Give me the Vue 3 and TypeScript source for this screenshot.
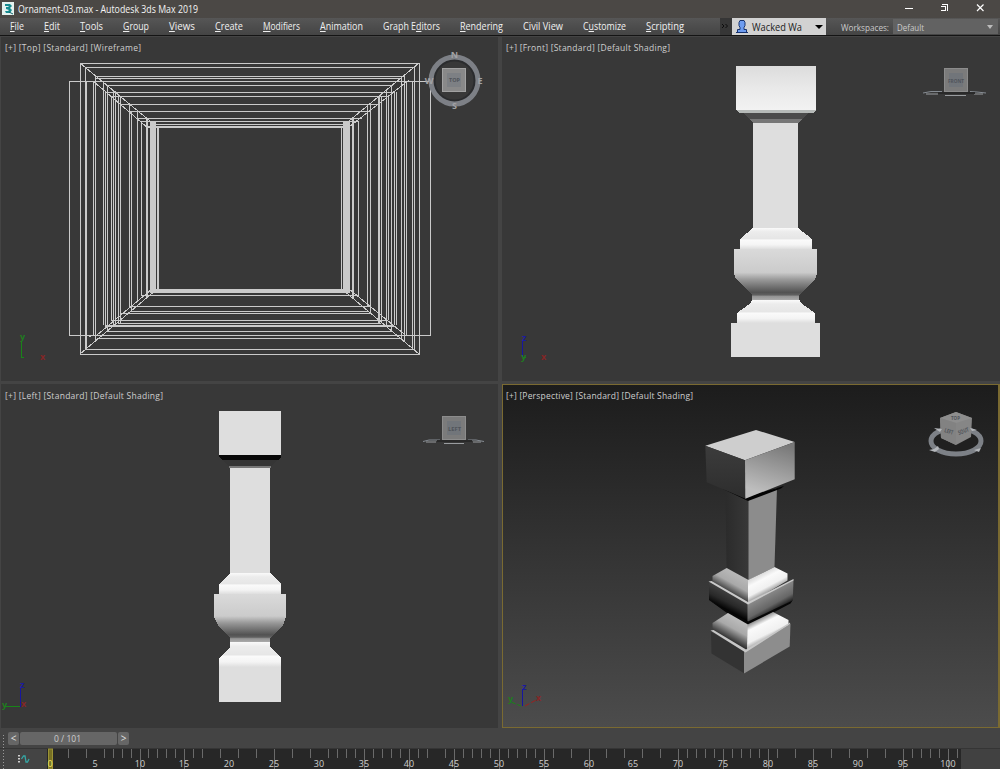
<script setup lang="ts">
interface MenuItem { pre: string; key: string; post: string; w: number }
const menu: MenuItem[] = [
  { pre: '', key: 'F', post: 'ile', w: 14 },
  { pre: '', key: 'E', post: 'dit', w: 16 },
  { pre: '', key: 'T', post: 'ools', w: 23 },
  { pre: '', key: 'G', post: 'roup', w: 26 },
  { pre: '', key: 'V', post: 'iews', w: 26 },
  { pre: '', key: 'C', post: 'reate', w: 28 },
  { pre: '', key: 'M', post: 'odifiers', w: 37 },
  { pre: '', key: 'A', post: 'nimation', w: 43 },
  { pre: 'Graph E', key: 'd', post: 'itors', w: 57 },
  { pre: '', key: 'R', post: 'endering', w: 43 },
  { pre: 'Civil View', key: '', post: '', w: 40 },
  { pre: 'C', key: 'u', post: 'stomize', w: 43 },
  { pre: '', key: 'S', post: 'cripting', w: 38 },
]

// Vertical wires of each half: x, top, bottom, width.
const wires: number[][] = [
  [86, 81, 349, 1], [93, 81, 335, 1], [95, 76, 341, 1], [103, 82, 325, 1], [105, 92, 325, 1],
  [107, 85, 331, 1], [111, 96, 320, 1], [113, 91, 326, 1], [115, 91, 326, 1], [118, 96, 323, 1],
  [120, 96, 323, 1], [129, 104, 306, 1], [131, 111, 311, 1], [137, 111, 300, 1], [141, 121, 295, 1],
  [146, 118, 298, 2], [150, 121, 293, 6], [157, 126, 292, 2],
]
const wiresRight: number[][] = [
  [412, 81, 349, 1], [406, 81, 335, 1], [404, 75, 341, 1], [401, 78, 338, 1], [396, 92, 325, 1],
  [394, 92, 325, 1], [391, 85, 331, 1], [388, 96, 320, 1], [386, 91, 326, 1], [381, 96, 323, 1],
  [378, 96, 323, 2], [370, 104, 313, 1], [367, 106, 306, 1], [358, 121, 295, 1], [352, 118, 298, 2],
  [343, 121, 293, 7], [341, 126, 290, 1],
]
// Horizontal wires: y, left, right, height.
const rows: number[][] = [
  [76, 95, 404, 1], [78, 95, 402, 1], [85, 107, 392, 1], [92, 105, 395, 1], [96, 111, 388, 1],
  [104, 121, 379, 1], [111, 130, 370, 1], [118, 137, 362, 1], [121, 141, 359, 1], [124, 153, 346, 1],
  [126, 146, 343, 2], [289, 152, 348, 4], [295, 141, 359, 1], [306, 129, 370, 1], [311, 131, 368, 1],
  [313, 120, 370, 1], [320, 111, 388, 1], [323, 118, 381, 1], [325, 105, 394, 2], [331, 107, 392, 1],
  [338, 97, 402, 1],
]
const range = (a: number, b: number, s = 1): number[] => {
  const r: number[] = []
  for (let i = a; i <= b; i += s) r.push(i)
  return r
}
const ticks = [2, 4, ...range(6, 17), ...range(19, 31, 2), ...range(32, 42), 44, ...range(45, 56), ...range(58, 68, 2), ...range(70, 81), ...range(83, 93, 2), ...range(95, 101)]
const labels = range(0, 100, 5)
const tx = (n: number): number => Math.floor(50.2 + n * 8.98)
</script>

<template>
  <div class="app">
    <header class="title">
      <svg class="open" width="200" height="18" viewBox="0 0 200 18">
        <rect x="2" y="2" width="12" height="13" fill="#e4f2ef" />
        <path d="M5 4h5l2 2-2 2 2 2-2 3H6l-1-2h3l1-1-3-1V7h3L8 6H5z" fill="#178c91" />
        <path d="M9 12l4 2" stroke="#10656e" />
        <text x="18" y="13" textLength="180" lengthAdjust="spacingAndGlyphs" class="t-title">Ornament-03.max - Autodesk 3ds Max 2019</text>
      </svg>
      <svg width="100" height="18" viewBox="900 0 100 18" shape-rendering="crispEdges">
        <path d="M905 8.500h8" stroke="#fff" />
        <path d="M942 4.500h5v6M941 6.500h4v4h-4" fill="none" stroke="#fff" />
        <path d="M977 4.500l6.500 6.500M983.500 4.500l-6.500 6.500" stroke="#fff" stroke-width="1.200" shape-rendering="auto" />
      </svg>
    </header>

    <nav class="menubar">
      <div class="menus">
        <svg v-for="m in menu" :key="m.key + m.post + m.pre" :width="m.w" height="17">
          <text x="0" y="12" :textLength="m.w" lengthAdjust="spacingAndGlyphs" class="t-menu">{{ m.pre }}<tspan v-if="m.key" class="mn">{{ m.key }}</tspan>{{ m.post }}</text>
        </svg>
      </div>
      <div class="more"><svg width="10" height="17"><path d="M2 6l2 2-2 2M5.500 6l2 2-2 2" fill="none" stroke="#0c0c0c" /></svg></div>
      <div class="user">
        <svg width="94" height="17" viewBox="732 18 94 17">
          <path d="M740 20.500h4l1 2v3l-1 2v2h2.500v3h-9v-3h2.500v-2l-1-2v-3z" fill="#6d9cf0" stroke="#17336f" />
          <path d="M736 32.500h12" stroke="#17336f" />
          <text x="752" y="30.500" textLength="50" lengthAdjust="spacingAndGlyphs" class="t-user">Wacked Wa</text>
          <path d="M815 25h8l-4 4z" fill="#000" />
        </svg>
      </div>
      <div class="ws">
        <svg class="open" width="67" height="17"><text x="15" y="12.500" textLength="48" lengthAdjust="spacingAndGlyphs" class="t-ws">Workspaces:</text></svg>
      </div>
      <div class="combo">
        <svg class="open" width="105" height="16"><text x="4" y="11.500" textLength="27" lengthAdjust="spacingAndGlyphs" class="t-ws">Default</text><path d="M94 6h6l-3 4z" fill="#bbb" /></svg>
      </div>
    </nav>

    <main class="views">
      <section class="view">
        <svg viewBox="1 37 498 344">
          <text x="5" y="51" textLength="136" lengthAdjust="spacing" class="t-vp">[+] [Top] [Standard] [Wireframe]</text>
          <g shape-rendering="crispEdges" fill="none" stroke="#cacaca">
            <path d="M80.500 63.500h339v291h-339zM85.500 67.500h329v282h-329zM69.500 81.500h361v254h-361z" />
            <path d="M80 63l76 63M93 81l55 47M419 63l-76 63M409 80l-60 47M80 354l76-64M93 335l-4 2M97 335l55-46M419 354l-76-64M404 334l-55-45" />
          </g>
          <g fill="#cacaca" shape-rendering="crispEdges">
            <rect v-for="w in wires" :key="'l' + w[0]" :x="w[0]" :y="w[1]" :width="w[3]" :height="w[2] - w[1]" />
            <rect v-for="w in wiresRight" :key="'r' + w[0]" :x="w[0]" :y="w[1]" :width="w[3]" :height="w[2] - w[1]" />
            <rect v-for="r in rows" :key="'h' + r[0]" :x="r[1]" :y="r[0]" :width="r[2] - r[1]" :height="r[3]" />
          </g>
          <circle cx="454.500" cy="80.500" r="20.500" fill="none" stroke="#2b2c2e" stroke-width="3" />
          <circle cx="454.500" cy="80.500" r="23.500" fill="none" stroke="#7d8086" stroke-width="5" />
          <rect x="442.500" y="68.500" width="23" height="23" fill="#898989" stroke="#a2a2a2" />
          <rect x="447" y="73" width="14" height="14" fill="#7d8084" />
          <text x="449" y="82" textLength="11" lengthAdjust="spacingAndGlyphs" class="t-cube">TOP</text>
          <g class="t-nesw" text-anchor="middle"><text x="454.500" y="58">N</text><text x="454.500" y="109">S</text><text x="429" y="84">W</text><text x="480" y="84">E</text></g>
          <path d="M21.500 358V341" stroke="#188418" fill="none" shape-rendering="crispEdges" /><text x="20" y="340" class="t-ax g">y</text>
          <path d="M21 357.500h3" stroke="#188418" /><text x="40" y="360" class="t-ax r">x</text>
        </svg>
      </section>

      <section class="view">
        <svg viewBox="502 37 498 344">
          <defs>
            <linearGradient id="capF" x2="0" y2="1"><stop stop-color="#dcdcdc" /><stop offset=".5" stop-color="#e9e9e9" /><stop offset="1" stop-color="#f2f2f2" /></linearGradient>
            <linearGradient id="sh" x2="0" y2="1"><stop stop-color="#fafafa" /><stop offset=".18" stop-color="#ececec" /><stop offset=".5" stop-color="#e6e6e6" /><stop offset=".58" stop-color="#fafafa" /><stop offset=".8" stop-color="#f4f4f4" /><stop offset="1" stop-color="#dedede" /></linearGradient>
            <linearGradient id="bulb" x2="0" y2="1"><stop stop-color="#dadada" /><stop offset=".46" stop-color="#cbcbcb" /><stop offset=".6" stop-color="#999" /><stop offset=".85" stop-color="#525252" /><stop offset=".9" stop-color="#606060" /><stop offset=".93" stop-color="#949494" /><stop offset="1" stop-color="#aaa" /></linearGradient>
          </defs>
          <text x="506" y="51" textLength="164" lengthAdjust="spacing" class="t-vp">[+] [Front] [Standard] [Default Shading]</text>
          <g shape-rendering="crispEdges">
            <path d="M736 66h80v44H736z" fill="url(#capF)" />
            <path d="M736 110h80l-3 3h-74z" fill="#b6bab8" />
            <path d="M743 113h66l-8 7h-50z" fill="#4b4b4b" /><path d="M750 119h52l-3 4h-46z" fill="#777" />
            <path d="M753 123h45v105h-45z" fill="#dedede" />
            <path d="M753 228h45l14 11v10h-72v-10z" fill="url(#sh)" />
            <path d="M734 249h83v25l-2 5-16 16v5h-47v-5l-16-16-2-5z" fill="url(#bulb)" />
            <path d="M752 300h48l1 3 14 10v10h-78v-10l14-10z" fill="url(#sh)" />
            <path d="M731 323h89v34h-89z" fill="#dedede" />
          </g>
          <path d="M923 93l8-1.500h11M970 91.500l7 .5 9 1" stroke="#858b92" fill="none" />
          <path d="M926 94h12M974 94h9M945 95.500h21" stroke="#999c9f" /><path d="M938 93h37" stroke="#292929" stroke-width="2" />
          <rect x="944.500" y="68.500" width="23" height="23" fill="#7b7b7b" stroke="#8c8c8c" /><rect x="949" y="73" width="14" height="14" fill="#71757a" />
          <text x="948" y="82.500" textLength="16" lengthAdjust="spacingAndGlyphs" class="t-cube">FRONT</text>
          <path d="M522.500 358V341" stroke="#1616a0" shape-rendering="crispEdges" /><path d="M523 357.500h3" stroke="#188418" /><text x="522" y="341" class="t-ax b">z</text><text x="521" y="360" class="t-ax g">y</text><text x="541" y="360" class="t-ax r">x</text>
        </svg>
      </section>

      <section class="view">
        <svg viewBox="1 384 498 344">
          <text x="5" y="399" textLength="158" lengthAdjust="spacing" class="t-vp">[+] [Left] [Standard] [Default Shading]</text>
          <g shape-rendering="crispEdges">
            <path d="M219 411h62v44h-62z" fill="#dedede" />
            <path d="M219 455h62v2l-3 3h-56l-3-3z" fill="#080808" /><path d="M222 460h56l-7 6h-42z" fill="#353535" /><path d="M229 466h42v2h-42z" fill="#777" />
            <path d="M230 468h40v105h-40z" fill="#dedede" />
            <path d="M230 573h40l11 11v10h-62v-10z" fill="url(#sh)" />
            <path d="M214 594h72v23l-3 8-13 13v4h-40v-4l-12-13-4-8z" fill="url(#bulb)" />
            <path d="M230 642h40v5l11 11v9h-62v-9l11-11z" fill="url(#sh)" />
            <path d="M219 667h62v35h-62z" fill="#dedede" />
          </g>
          <path d="M423 441.500l6-1.500h11M468 440h8l8 1.500" stroke="#858b92" fill="none" /><path d="M426 442h10M473 442h8M444 443.500h20" stroke="#999c9f" /><path d="M437 441h35" stroke="#292929" stroke-width="2" />
          <rect x="442.500" y="416.500" width="23" height="23" fill="#7b7b7b" stroke="#8c8c8c" /><rect x="447" y="421" width="14" height="14" fill="#71757a" />
          <text x="448" y="430.500" textLength="13" lengthAdjust="spacingAndGlyphs" class="t-cube">LEFT</text>
          <g shape-rendering="crispEdges"><path d="M20.500 707V688" stroke="#1616a0" /><path d="M4 706.500h16" stroke="#188418" /></g><text x="20" y="688" class="t-ax b">z</text><text x="2" y="708" class="t-ax g">y</text><text x="21" y="707" class="t-ax r">x</text>
        </svg>
      </section>

      <section class="view active">
        <svg viewBox="502 384 498 344">
          <defs>
            <linearGradient id="bg" x2="0" y2="1"><stop stop-color="#1c1c1c" /><stop offset=".5" stop-color="#343434" /><stop offset="1" stop-color="#4c4c4c" /></linearGradient>
            <linearGradient id="capL" x2="0" y2="1"><stop stop-color="#3c3c3c" /><stop offset="1" stop-color="#2d2d2d" /></linearGradient>
            <linearGradient id="capR" x1=".65" y1="0" x2=".4" y2=".9"><stop stop-color="#787878" /><stop offset="1" stop-color="#bdbdbd" /></linearGradient>
            <linearGradient id="shaftL"><stop stop-color="#2b2b2b" /><stop offset="1" stop-color="#383838" /></linearGradient>
            <linearGradient id="shL1" gradientUnits="userSpaceOnUse" x1="735" y1="573" x2="725" y2="591"><stop stop-color="#b8b8b8" /><stop offset=".5" stop-color="#a9a9a9" /><stop offset="1" stop-color="#333" /></linearGradient>
            <linearGradient id="shL2" gradientUnits="userSpaceOnUse" x1="738" y1="618" x2="727" y2="638"><stop stop-color="#bebebe" /><stop offset=".5" stop-color="#a9a9a9" /><stop offset="1" stop-color="#333" /></linearGradient>
            <linearGradient id="shR1" gradientUnits="userSpaceOnUse" x1="761" y1="573" x2="771" y2="592"><stop stop-color="#d8d8d8" /><stop offset=".3" stop-color="#fafafa" /><stop offset=".7" stop-color="#f0f0f0" /><stop offset="1" stop-color="#8c8c8c" /></linearGradient>
            <linearGradient id="shR2" gradientUnits="userSpaceOnUse" x1="760" y1="618" x2="771" y2="640"><stop stop-color="#8c8c8c" /><stop offset=".25" stop-color="#fafafa" /><stop offset=".7" stop-color="#f0f0f0" /><stop offset="1" stop-color="#8c8c8c" /></linearGradient>
            <linearGradient id="bxL" gradientUnits="userSpaceOnUse" x1="731" y1="593" x2="723" y2="609"><stop stop-color="#404040" /><stop offset=".55" stop-color="#292929" /><stop offset="1" stop-color="#000" /></linearGradient>
            <linearGradient id="bxR" gradientUnits="userSpaceOnUse" x1="766" y1="594" x2="776" y2="612"><stop stop-color="#8a8a8a" /><stop offset=".6" stop-color="#666" /><stop offset="1" stop-color="#0c0c0c" /></linearGradient>
          </defs>
          <rect x="502" y="384" width="498" height="344" fill="url(#bg)" />
          <text x="506" y="399" textLength="187" lengthAdjust="spacing" class="t-vp">[+] [Perspective] [Standard] [Default Shading]</text>
          <path d="M725.500 488l23 12v80l-22-12z" fill="url(#shaftL)" /><path d="M748.500 499l28.500-11-2.500 79-26 13z" fill="#8c8c8c" />
          <path d="M721 488l25 9 38-11-3 2.500-33 12.500z" fill="#030303" />
          <path d="M705.300 445.700L756 430l38.700 12-49.700 18.300z" fill="#cecece" />
          <path d="M705.300 445.700L745 460.300l.5 38.400-38.800-16.400z" fill="url(#capL)" /><path d="M745 460.300L794.700 442v37.300l-49.400 19.400z" fill="url(#capR)" />
          <path d="M727 612l21 8 26-10v5l-26 14-21-11z" fill="#777" />
          <path d="M726.700 568l21.800 12v26L712.500 584v-8z" fill="url(#shL1)" /><path d="M748 580l26.500-13 13 6.500v7L748 604z" fill="url(#shR1)" />
          <path d="M709 582l39 22v20l-39-24z" fill="url(#bxL)" /><path d="M747.500 603.500l46-24-.7 21-45.300 24z" fill="url(#bxR)" />
          <path d="M709 600l39 21.500 44.500-21-2 3-42 22-18-10z" fill="#070707" />
          <path d="M708.500 581.500l3-.5 36.500 21 45.500-23v1.500L748 604.500z" fill="#cacaca" />
          <path d="M728 613l20 11.500-1 25.500-34.500-21v-6z" fill="url(#shL2)" /><path d="M747.500 624.500l25.500-12.500 15.500 8v7L747 650z" fill="url(#shR2)" />
          <path d="M711 632l33.500 19v22.500l-33-20z" fill="#333" /><path d="M744 651.500l46.500-28-.8 23-45.700 27z" fill="#8d8d8d" />
          <path d="M710.500 630.500l3-.5 32.500 19.500 44-27v1.500l-44.500 28.500z" fill="#c6c6c6" />
          <ellipse cx="956" cy="441" rx="25" ry="13" fill="#202020" stroke="#7d8187" stroke-width="5" />
          <path d="M940 418l16-6 16 6-1 19-15 8-15-7z" fill="#868686" /><path d="M940 418l16 5 16-5-16-6z" fill="#8e8e8e" /><path d="M940 418l16 5v22l-15-7z" fill="#828282" />
          <g class="t-cube"><text x="951" y="420" textLength="9" lengthAdjust="spacingAndGlyphs">TOP</text><text x="944" y="432" textLength="9" lengthAdjust="spacingAndGlyphs" transform="rotate(18 944 432)">LEFT</text><text x="959" y="435" textLength="11" lengthAdjust="spacingAndGlyphs" transform="rotate(-20 959 435)">SOUT</text></g>
          <g fill="#b4b7bb"><path d="M929 450l5-1 4-3 1 3-4 3zM974 450l7-2-2 4zM934 428l8 1-2 3zM970 428l7 2-5 1z" /></g>
          <path d="M522.500 706V689" stroke="#1616a0" shape-rendering="crispEdges" /><path d="M521 706l-10-4" stroke="#188418" stroke-dasharray="4 2" /><path d="M525 706l13-7" stroke="#9c2020" stroke-dasharray="5 2" /><text x="522" y="690" class="t-ax b">z</text><text x="508" y="702" class="t-ax g">y</text><text x="536" y="701" class="t-ax r">x</text>
        </svg>
      </section>
    </main>

    <div class="slider">
      <span class="step">&lt;</span>
      <span class="thumb"><svg width="95" height="13"><text x="34" y="10" textLength="27" lengthAdjust="spacingAndGlyphs" class="t-num">0 / 101</text></svg></span>
      <span class="step">&gt;</span>
    </div>
    <footer class="track">
      <svg width="1000" height="21" viewBox="0 748 1000 21">
        <rect x="47" y="749" width="914" height="20" fill="#272727" /><path d="M0 748.500h1000" stroke="#353535" />
        <rect x="961" y="749" width="39" height="20" fill="#414141" />
        <g shape-rendering="crispEdges" fill="#6a6a6a"><rect v-for="n in ticks" :key="n" :x="tx(n)" y="749" width="1" :height="n % 5 === 0 ? 20 : 9" /></g>
        <rect x="48.500" y="749" width="4" height="20" fill="#777024" stroke="#9b9335" />
        <g class="t-num" text-anchor="middle"><text v-for="n in labels" :key="n" :x="tx(n)" y="767" :class="{ cur: n === 0 }">{{ n }}</text></g>
        <path d="M19 755v8" stroke="#d0d0d0" stroke-width="2" stroke-dasharray="1.500 1.500" /><path d="M21.500 759l2-3h1.500l1 6h1.500l1.500-3" fill="none" stroke="#35a7a5" stroke-width="1.300" />
      </svg>
    </footer>
    <svg class="grip" width="4" height="36"><path d="M2.500 1v35" stroke="#999" stroke-width="1" stroke-dasharray="1 2" /></svg>
  </div>
</template>

<style>
body { margin: 0; background: #444; overflow: hidden; }
</style>
<style scoped>
.app { position: relative; width: 1000px; height: 769px; overflow: hidden; background: #444; font-family: "Open Sans", "Noto Sans", sans-serif; display: flex; flex-direction: column; }
svg { display: block; overflow: hidden; }
.open { overflow: visible; }
.title { height: 18px; background: #4b4845; display: flex; justify-content: space-between; }
.menubar { height: 17px; flex: none; display: flex; background: linear-gradient(#565656, #444); border-bottom: 1px solid #141414; }
.menus { width: 710px; padding-left: 10px; display: flex; gap: 20px; }
.menus svg { flex: none; overflow: visible; }
.more { width: 12px; background: #363636; }
.user { width: 94px; background: #d2d2d2; }
.ws { width: 67px; }
.combo { height: 15px; width: 105px; background: #626262; margin-top: 1px; }
.views { height: 692px; flex: none; padding: 1px 0 0 1px; display: grid; grid-template-columns: 497px 498px; grid-template-rows: 344px 344px; gap: 3px 4px; box-sizing: border-box; background: #444; }
.view { background: #383838; overflow: hidden; }
.view svg { width: 498px; height: 344px; }
.active { position: relative; }
.active::after { content: ""; position: absolute; inset: 0; border: 1px solid #7a6a31; border-right-width: 2px; }
.slider { height: 20px; flex: none; box-sizing: border-box; padding: 4px 0 0 8px; display: flex; gap: 1px; }
.step { width: 11px; height: 13px; border-radius: 2px; background: #666; color: #e0e0e0; font-size: 10px; line-height: 13px; text-align: center; }
.thumb { width: 97px; height: 13px; border-radius: 2px; background: #666; }
.track { height: 21px; }
.grip { position: absolute; left: 1px; top: 734px; }
.t-title { font-size: 10px; fill: #f4f4f4; }
.t-menu { font-size: 10px; fill: #f0f0f0; }
.mn { text-decoration: underline; }
.t-user { font-size: 10px; fill: #202020; }
.t-ws { font-size: 9.500px; fill: #cbcbcb; }
.t-vp { font-size: 8.500px; fill: #cecece; }
.t-num { font-size: 9px; fill: #cfcfcf; }
.cur { fill: #eee56a; }
.t-cube { font-size: 6px; font-weight: bold; fill: #50545a; }
.t-nesw { font-size: 9px; font-weight: bold; fill: #a2a2a4; }
.t-ax { font-size: 9px; font-weight: bold; }
.g { fill: #207c20; }
.r { fill: #842626; }
.b { fill: #1b1ba0; }
</style>
